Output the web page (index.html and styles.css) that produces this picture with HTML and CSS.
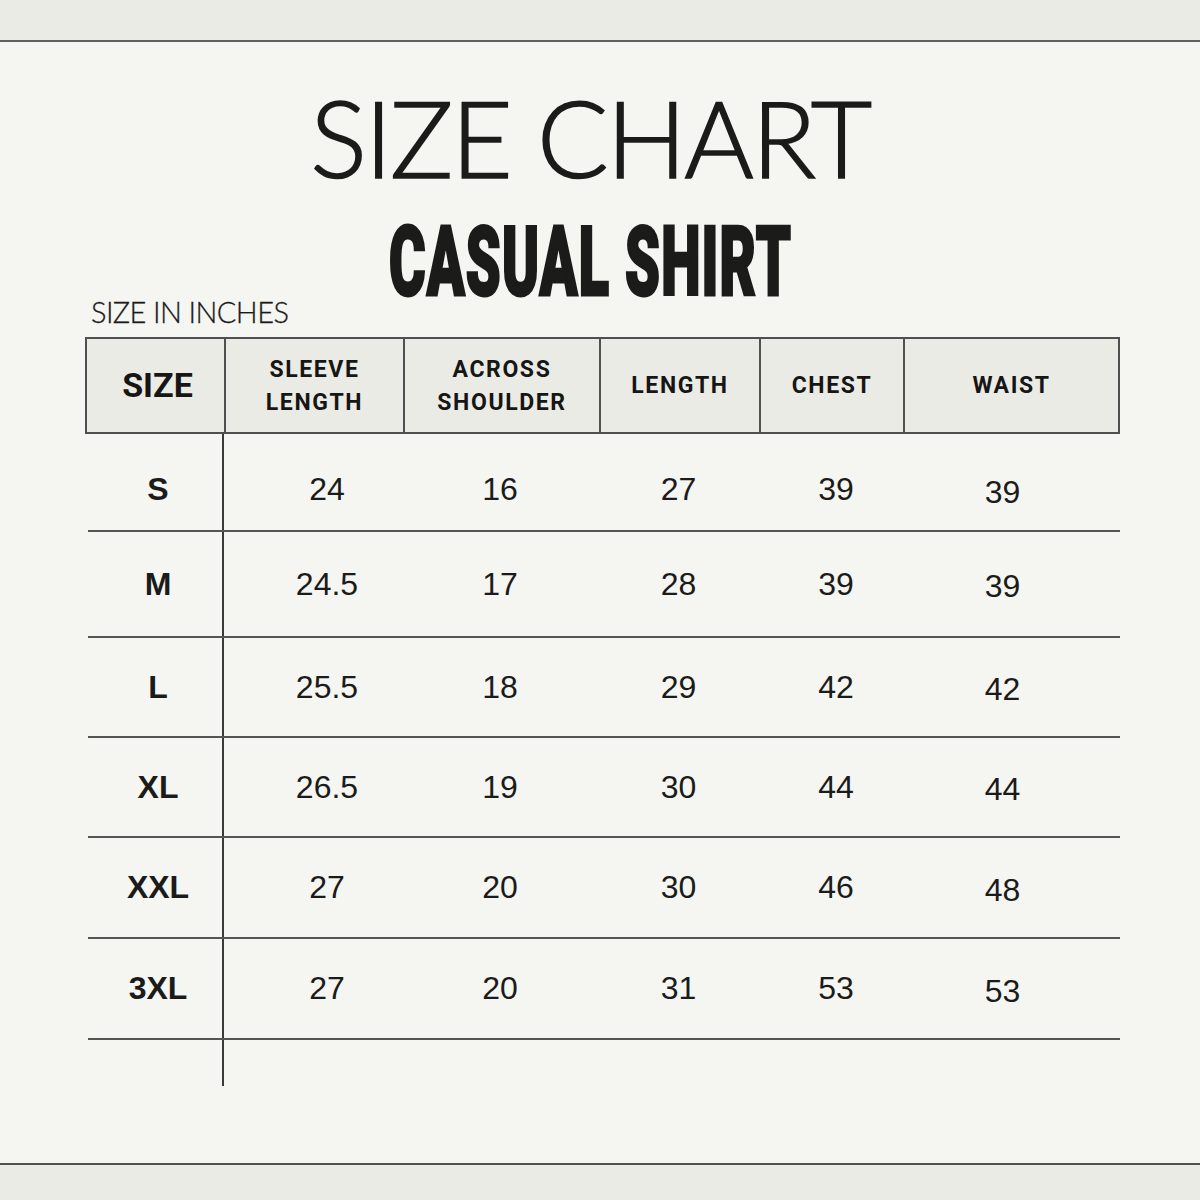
FILE: index.html
```html
<!DOCTYPE html>
<html lang="en">
<head>
<meta charset="utf-8">
<title>Size Chart - Casual Shirt</title>
<link rel="stylesheet" href="styles.css">
</head>
<body>
<div class="band band-top"></div>
<main class="sheet">
  <h1 class="title">SIZE CHART</h1>
  <h2 class="subtitle"><span class="subtitle-text">CASUAL SHIRT</span></h2>
  <p class="unit">SIZE IN INCHES</p>
  <div class="chart">
    <div class="head">
      <div class="hcell hsize">SIZE</div>
      <div class="hcell">SLEEVE<br>LENGTH</div>
      <div class="hcell">ACROSS<br>SHOULDER</div>
      <div class="hcell">LENGTH</div>
      <div class="hcell">CHEST</div>
      <div class="hcell">WAIST</div>
    </div>
    <div class="rows">
      <div class="row row-first">
        <div class="cell csize">S</div><div class="cell">24</div><div class="cell">16</div><div class="cell">27</div><div class="cell">39</div><div class="cell cwaist">39</div>
      </div>
      <div class="row row-tall">
        <div class="cell csize">M</div><div class="cell">24.5</div><div class="cell">17</div><div class="cell">28</div><div class="cell">39</div><div class="cell cwaist">39</div>
      </div>
      <div class="row">
        <div class="cell csize">L</div><div class="cell">25.5</div><div class="cell">18</div><div class="cell">29</div><div class="cell">42</div><div class="cell cwaist">42</div>
      </div>
      <div class="row">
        <div class="cell csize">XL</div><div class="cell">26.5</div><div class="cell">19</div><div class="cell">30</div><div class="cell">44</div><div class="cell cwaist">44</div>
      </div>
      <div class="row row-wide">
        <div class="cell csize">XXL</div><div class="cell">27</div><div class="cell">20</div><div class="cell">30</div><div class="cell">46</div><div class="cell cwaist">48</div>
      </div>
      <div class="row row-wide">
        <div class="cell csize">3XL</div><div class="cell">27</div><div class="cell">20</div><div class="cell">31</div><div class="cell">53</div><div class="cell cwaist">53</div>
      </div>
      <div class="tail"></div>
    </div>
  </div>
</main>
<div class="band band-bottom"></div>
</body>
</html>
```
FILE: styles.css
```css
* { box-sizing: border-box; }
html, body { margin: 0; padding: 0; }
body {
  width: 1200px;
  height: 1200px;
  background: #f5f5f2;
  color: #1b1b19;
  display: flex;
  flex-direction: column;
  overflow: hidden;
}
.band { background: #ebebe5; flex: none; }
.band-top { height: 42px; border-bottom: 2px solid #606060; }
.band-bottom { height: 37px; border-top: 2px solid #505050; }

.sheet {
  flex: none;
  height: 1121px;
  display: flex;
  flex-direction: column;
  padding-left: 85px;
}
.title {
  margin: 42px 20px 0 -85px;
  font-family: Lato, "Open Sans", sans-serif;
  font-weight: 300;
  font-size: 106px;
  line-height: 106px;
  height: 106px;
  text-align: center;
  letter-spacing: -2.2px;
  -webkit-text-stroke: 1.6px #1b1b19;
}
.subtitle {
  margin: 37px 20px 0 -85px;
  height: 70px;
  line-height: 70px;
  text-align: center;
  font-family: Roboto, sans-serif;
  font-weight: 900;
  font-size: 97px;
}
.subtitle-text {
  display: inline-block;
  transform: scaleX(0.575);
  -webkit-text-stroke: 3px #1b1b19;
  letter-spacing: 2px;
}
.unit {
  margin: 0 0 0 6px;
  height: 29px;
  font-family: Lato, sans-serif;
  font-weight: 300;
  font-size: 29px;
  line-height: 29px;
  letter-spacing: -0.6px;
  -webkit-text-stroke: 0.3px #1b1b19;
}
.chart {
  margin-top: 11px;
  width: 1035px;
  display: flex;
  flex-direction: column;
}
.head {
  display: grid;
  grid-template-columns: 137px 179px 196px 160px 144px 215px;
  height: 97px;
  border: 2px solid #505050;
  background: #ebebe6;
}
.hcell {
  display: flex;
  align-items: center;
  justify-content: center;
  text-align: center;
  font-family: Roboto, sans-serif;
  font-weight: 700;
  font-size: 23px;
  line-height: 33px;
  letter-spacing: 1.6px;
  border-left: 2px solid #505050;
  color: #161614;
}
.hcell.hsize {
  border-left: none;
  font-size: 34px;
  letter-spacing: 0;
  padding-left: 4px;
}
.rows {
  margin-left: 3px;
  width: 1032px;
  display: flex;
  flex-direction: column;
}
.row {
  display: grid;
  grid-template-columns: 136px 206px 140px 217px 98px 235px;
  height: 100px;
  border-bottom: 2px solid #555;
}
.row-first { height: 98px; }
.row-tall { height: 106px; }
.row-wide { height: 101px; }
.cell {
  display: flex;
  align-items: center;
  justify-content: center;
  font-family: "Liberation Sans", Arial, sans-serif;
  font-size: 32px;
}
.row-first .cell { padding-top: 15px; }
.cell.csize {
  font-weight: 700;
  padding-left: 6px;
  border-right: 2px solid #3a3a3a;
}
.cell.cwaist { padding-top: 5px; }
.row-first .cell.cwaist { padding-top: 20px; }
.tail {
  width: 136px;
  height: 46px;
  border-right: 2px solid #3a3a3a;
}
```
